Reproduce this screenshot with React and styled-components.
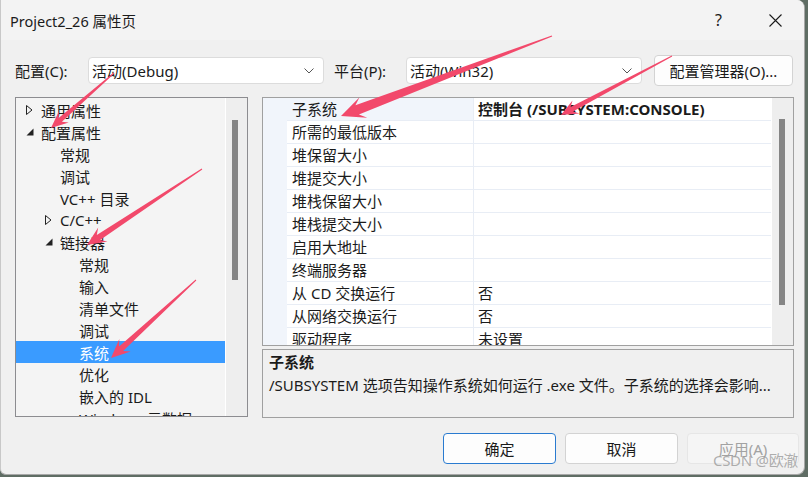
import React from "react";
import styled, { createGlobalStyle } from "styled-components";

const Global = createGlobalStyle`
  html, body { margin: 0; padding: 0; background: #5f6d64; }
  body { width: 808px; height: 477px; overflow: hidden;
    font-family: "Noto Sans", "Noto Sans CJK SC", sans-serif; }
  * { box-sizing: border-box; }
`;

const Window = styled.div`
  position: relative;
  width: 805px;
  height: 475px;
  background: #f0f0f0;
  border-radius: 0 8px 8px 6px;
  border-right: 1px solid #a8a8a8;
  border-bottom: 1px solid #a8a8a8;
  border-left: 1px solid #c8c8c8;
  display: flex;
  flex-direction: column;
  overflow: hidden;
  font-size: 15px;
  color: #1b1b1b;
`;

const TitleBar = styled.div`
  height: 40px;
  flex: none;
  display: flex;
  align-items: center;
  padding-left: 9px;
  background: #f3f3f3;
`;

const TitleText = styled.div`
  font-size: 14.5px;
  line-height: 20px;
  margin-top: 1px;
`;

const CaptionBtn = styled.div`
  width: 57px;
  height: 40px;
  display: flex;
  align-items: center;
  justify-content: center;
  font-size: 16px;
  margin-left: ${(p) => (p.$first ? "auto" : "0")};
`;

const Toolbar = styled.div`
  margin-top: 15px;
  height: 31px;
  flex: none;
  display: flex;
  align-items: center;
  padding-left: 14px;
`;

const Label = styled.div`
  width: ${(p) => p.$w}px;
  margin-left: ${(p) => p.$ml || 0}px;
  line-height: 20px;
`;

const Combo = styled.div`
  width: ${(p) => p.$w}px;
  height: 27px;
  background: #ffffff;
  border: 1px solid #dcdcdc;
  border-radius: 4px;
  display: flex;
  align-items: center;
  padding: 0 9px 0 3px;
  justify-content: space-between;
  white-space: nowrap;
`;

const PlainButton = styled.div`
  width: ${(p) => p.$w}px;
  height: 31px;
  margin-left: ${(p) => p.$ml || 0}px;
  background: ${(p) => (p.$disabled ? "#f5f5f5" : "#fdfdfd")};
  border: 1px solid ${(p) => (p.$primary ? "#2a7bd0" : p.$disabled ? "#e6e6e6" : "#d3d3d3")};
  border-radius: 4px;
  display: flex;
  align-items: center;
  justify-content: center;
  white-space: nowrap;
  color: ${(p) => (p.$disabled ? "#a2a2a2" : "#1b1b1b")};
`;

const Main = styled.div`
  margin-top: 11px;
  height: 321px;
  flex: none;
  display: flex;
  padding-left: 14px;
  gap: 14px;
`;

const TreePanel = styled.div`
  width: 233px;
  height: 320px;
  border: 1px solid #8c8c90;
  background: #f4f4f4;
  display: flex;
`;

const TreeList = styled.div`
  flex: 1;
  padding-top: 1px;
  overflow: hidden;
`;

const TreeRow = styled.div`
  height: 22px;
  display: flex;
  align-items: center;
  padding-left: ${(p) => 10 + p.$level * 19}px;
  background: ${(p) => (p.$selected ? "#3a9bff" : "transparent")};
  color: ${(p) => (p.$selected ? "#ffffff" : "#1b1b1b")};
  white-space: nowrap;
`;

const Toggle = styled.div`
  width: 15px;
  height: 22px;
  display: flex;
  align-items: center;
  flex: none;
`;

const Track = styled.div`
  width: 22px;
  flex: none;
  border-left: 1px solid #ffffff;
  background: #eeeeee;
  padding-top: ${(p) => p.$top}px;
  padding-left: ${(p) => p.$left}px;
`;

const Thumb = styled.div`
  width: 6px;
  height: ${(p) => p.$h}px;
  background: #858585;
`;

const RightCol = styled.div`
  width: 532px;
  display: flex;
  flex-direction: column;
  gap: 3px;
`;

const Grid = styled.div`
  height: 249px;
  border: 1px solid #a0a0a0;
  display: flex;
  background: #ffffff;
`;

const GridBody = styled.div`
  flex: 1;
  overflow: hidden;
  background: #f1f5fb;
`;

const GridRow = styled.div`
  display: grid;
  grid-template-columns: 24px 186px 1fr;
  height: 23px;
`;

const Gutter = styled.div`
  background: #f1f5fb;
`;

const Cell = styled.div`
  background: ${(p) => (p.$hl ? "#f1f5fb" : "#ffffff")};
  border-bottom: 1px solid #e8edf5;
  border-left: ${(p) => (p.$value ? "1px solid #e8edf5" : "none")};
  padding-left: ${(p) => (p.$value ? 4 : 5)}px;
  font-weight: ${(p) => (p.$bold ? 700 : 400)};
  line-height: 23px;
  white-space: nowrap;
  overflow: hidden;
`;

const Desc = styled.div`
  height: 69px;
  border: 1px solid #a0a0a0;
  background: #f0f0f0;
  padding: 1px 6px;
  line-height: 23px;
  white-space: nowrap;
  overflow: hidden;
`;

const DescTitle = styled.div`
  font-weight: 700;
`;

const Footer = styled.div`
  margin-top: 15px;
  display: flex;
  justify-content: flex-end;
  gap: 9px;
  padding-right: 5px;
`;

const Overlay = styled.svg`
  position: absolute;
  left: 0;
  top: 0;
  pointer-events: none;
`;

const Watermark = styled.div`
  position: absolute;
  left: 712px;
  top: 449px;
  font-size: 15px;
  color: rgba(150, 150, 150, 0.75);
  letter-spacing: -0.3px;
`;

const Chevron = () => (
  <svg width="10" height="6" viewBox="0 0 10 6">
    <path d="M0.5 0.5 L5 5 L9.5 0.5" fill="none" stroke="#555" strokeWidth="1" />
  </svg>
);

const Collapsed = () => (
  <svg width="7" height="10" viewBox="0 0 7 10">
    <path d="M0.5 0.5 L6 5 L0.5 9.5 Z" fill="none" stroke="#222" strokeWidth="1" />
  </svg>
);

const Expanded = () => (
  <svg width="8" height="8" viewBox="0 0 8 8">
    <path d="M7.5 0.5 L7.5 7.5 L0.5 7.5 Z" fill="#222" />
  </svg>
);

const CloseIcon = () => (
  <svg width="13" height="13" viewBox="0 0 13 13">
    <path d="M0.5 0.5 L12.5 12.5 M12.5 0.5 L0.5 12.5" stroke="#1b1b1b" strokeWidth="1.1" />
  </svg>
);

function arrowPoints([x1, y1], [x2, y2], shaftW, headLen, headW) {
  const dx = x2 - x1, dy = y2 - y1;
  const len = Math.hypot(dx, dy);
  const ux = dx / len, uy = dy / len;
  const nx = -uy, ny = ux;
  const bx = x2 - ux * headLen * 0.72, by = y2 - uy * headLen * 0.72;
  const hx = x2 - ux * headLen, hy = y2 - uy * headLen;
  const pts = [
    [x1 + nx * 0.5, y1 + ny * 0.5],
    [bx + nx * shaftW / 2, by + ny * shaftW / 2],
    [hx + nx * headW / 2, hy + ny * headW / 2],
    [x2, y2],
    [hx - nx * headW / 2, hy - ny * headW / 2],
    [bx - nx * shaftW / 2, by - ny * shaftW / 2],
    [x1 - nx * 0.5, y1 - ny * 0.5],
  ];
  return pts.map((p) => p.map((v) => v.toFixed(1)).join(",")).join(" ");
}

const arrows = [
  { from: [113, 73], to: [50, 128], w: 5, hl: 17, hw: 15 },
  { from: [551, 36], to: [340, 116], w: 10, hl: 24, hw: 22 },
  { from: [671, 56], to: [560, 115], w: 5, hl: 17, hw: 15 },
  { from: [201, 169], to: [86, 245], w: 6, hl: 19, hw: 17 },
  { from: [195, 280], to: [110, 358], w: 6, hl: 19, hw: 17 },
];

const tree = [
  { t: "通用属性", level: 0, tog: "c" },
  { t: "配置属性", level: 0, tog: "e" },
  { t: "常规", level: 1 },
  { t: "调试", level: 1 },
  { t: "VC++ 目录", level: 1 },
  { t: "C/C++", level: 1, tog: "c" },
  { t: "链接器", level: 1, tog: "e" },
  { t: "常规", level: 2 },
  { t: "输入", level: 2 },
  { t: "清单文件", level: 2 },
  { t: "调试", level: 2 },
  { t: "系统", level: 2, sel: true },
  { t: "优化", level: 2 },
  { t: "嵌入的 IDL", level: 2 },
  { t: "Windows 元数据", level: 2 },
];

const props = [
  ["子系统", "控制台 (/SUBSYSTEM:CONSOLE)", true],
  ["所需的最低版本", ""],
  ["堆保留大小", ""],
  ["堆提交大小", ""],
  ["堆栈保留大小", ""],
  ["堆栈提交大小", ""],
  ["启用大地址", ""],
  ["终端服务器", ""],
  ["从 CD 交换运行", "否"],
  ["从网络交换运行", "否"],
  ["驱动程序", "未设置"],
];

export default function App() {
  return (
    <>
      <Global />
      <Window>
        <TitleBar>
          <TitleText>Project2_26 属性页</TitleText>
          <CaptionBtn $first>?</CaptionBtn>
          <CaptionBtn>
            <CloseIcon />
          </CaptionBtn>
        </TitleBar>

        <Toolbar>
          <Label $w={73}>配置(C):</Label>
          <Combo $w={236}>
            <span>活动(Debug)</span>
            <Chevron />
          </Combo>
          <Label $w={72} $ml={10}>平台(P):</Label>
          <Combo $w={236}>
            <span>活动(Win32)</span>
            <Chevron />
          </Combo>
          <PlainButton $w={139} $ml={12}>配置管理器(O)...</PlainButton>
        </Toolbar>

        <Main>
          <TreePanel>
            <TreeList>
              {tree.map((r, i) => (
                <TreeRow key={i} $level={r.level} $selected={r.sel}>
                  <Toggle>
                    {r.tog === "c" && <Collapsed />}
                    {r.tog === "e" && <Expanded />}
                  </Toggle>
                  {r.t}
                </TreeRow>
              ))}
            </TreeList>
            <Track $top={22} $left={6}>
              <Thumb $h={160} />
            </Track>
          </TreePanel>

          <RightCol>
            <Grid>
              <GridBody>
                {props.map(([n, v, sel], i) => (
                  <GridRow key={i}>
                    <Gutter />
                    <Cell $hl={sel}>{n}</Cell>
                    <Cell $value $bold={sel}>{v}</Cell>
                  </GridRow>
                ))}
              </GridBody>
              <Track $top={21} $left={7}>
                <Thumb $h={186} />
              </Track>
            </Grid>
            <Desc>
              <DescTitle>子系统</DescTitle>
              <div>/SUBSYSTEM 选项告知操作系统如何运行 .exe 文件。子系统的选择会影响...</div>
            </Desc>
          </RightCol>
        </Main>

        <Footer>
          <PlainButton $w={113} $primary>确定</PlainButton>
          <PlainButton $w={113}>取消</PlainButton>
          <PlainButton $w={112} $disabled>应用(A)</PlainButton>
        </Footer>

        <Watermark>CSDN @欧澈</Watermark>
        <Overlay width="808" height="477">
          {arrows.map((a, i) => (
            <polygon key={i} points={arrowPoints(a.from, a.to, a.w, a.hl, a.hw)} fill="#f2496b" />
          ))}
        </Overlay>
      </Window>
    </>
  );
}
